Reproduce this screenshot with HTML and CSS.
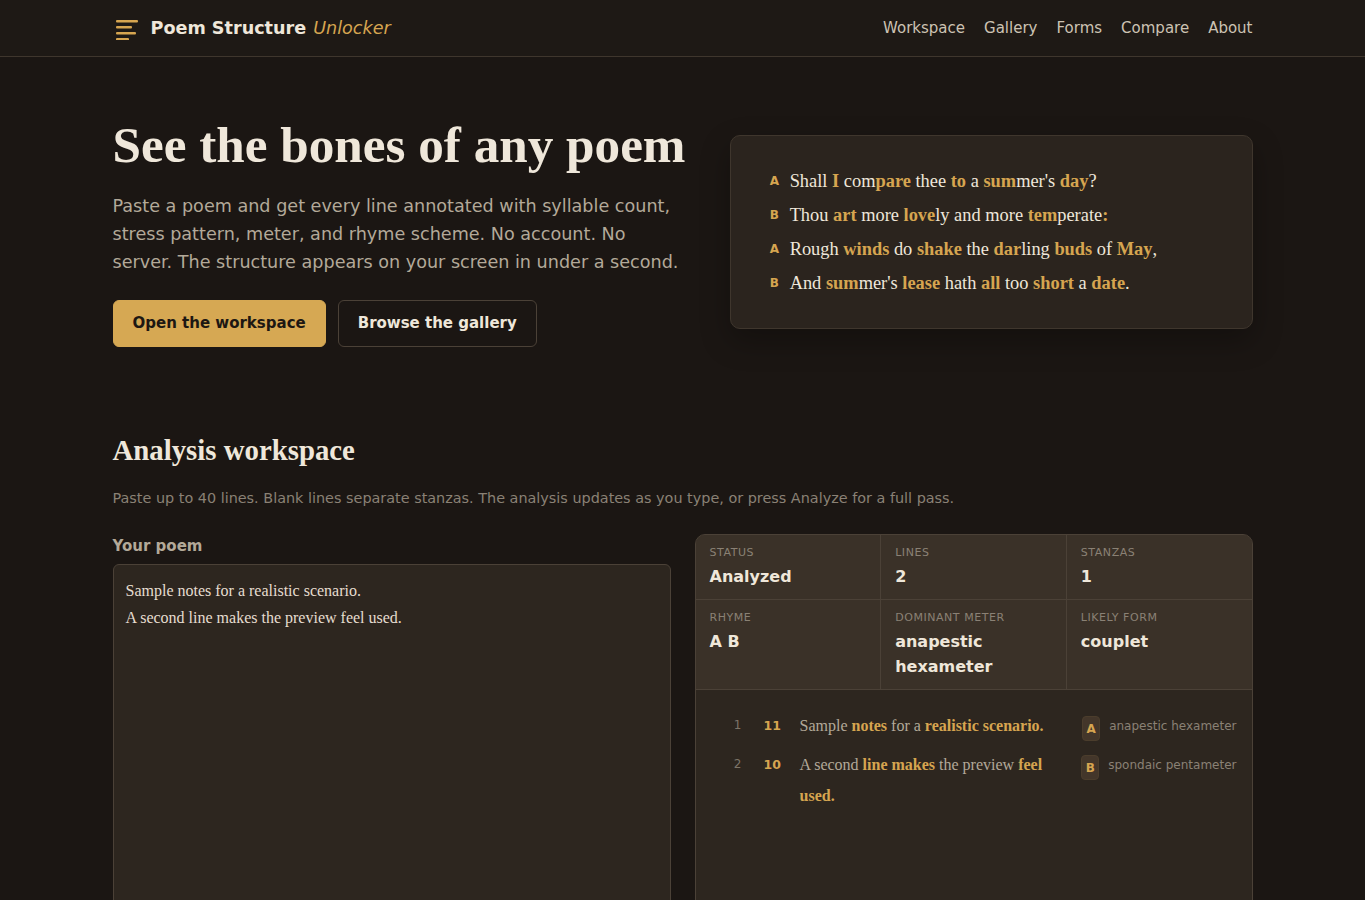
FILE: index.html
```html
<!DOCTYPE html>
<html lang="en">
<head>
<meta charset="utf-8">
<title>Poem Structure Unlocker</title>
<link rel="stylesheet" href="styles.css">
</head>
<body>
<header class="site-header">
  <div class="container header-inner">
    <a class="brand" href="#">
      <svg class="brand-icon" width="22" height="22" viewBox="0 0 22 22" aria-hidden="true">
        <rect x="0" y="2" width="22" height="2.6" rx="1" />
        <rect x="0" y="8" width="16" height="2.6" rx="1" />
        <rect x="0" y="14" width="20" height="2.6" rx="1" />
        <rect x="0" y="20" width="13" height="2.6" rx="1" />
      </svg>
      <span class="brand-name">Poem Structure</span>
      <span class="brand-accent">Unlocker</span>
    </a>
    <nav class="nav">
      <a href="#">Workspace</a>
      <a href="#">Gallery</a>
      <a href="#">Forms</a>
      <a href="#">Compare</a>
      <a href="#">About</a>
    </nav>
  </div>
</header>

<main>
  <section class="hero container">
    <div class="hero-copy">
      <h1>See the bones of any poem</h1>
      <p class="lede">Paste a poem and get every line annotated with syllable count, stress pattern, meter, and rhyme scheme. No account. No server. The structure appears on your screen in under a second.</p>
      <div class="hero-actions">
        <a class="btn btn-primary" href="#">Open the workspace</a>
        <a class="btn btn-ghost" href="#">Browse the gallery</a>
      </div>
    </div>
    <div class="sample-card">
      <div class="sample-line"><span class="rhyme-tag">A</span><span class="verse">Shall <b>I</b> com<b>pare</b> thee <b>to</b> a <b>sum</b>mer's <b>day</b>?</span></div>
      <div class="sample-line"><span class="rhyme-tag">B</span><span class="verse">Thou <b>art</b> more <b>love</b>ly and more <b>tem</b>perate<b>:</b></span></div>
      <div class="sample-line"><span class="rhyme-tag">A</span><span class="verse">Rough <b>winds</b> do <b>shake</b> the <b>dar</b>ling <b>buds</b> of <b>May</b>,</span></div>
      <div class="sample-line"><span class="rhyme-tag">B</span><span class="verse">And <b>sum</b>mer's <b>lease</b> hath <b>all</b> too <b>short</b> a <b>date</b>.</span></div>
    </div>
  </section>

  <section class="workspace container">
    <h2>Analysis workspace</h2>
    <p class="section-note">Paste up to 40 lines. Blank lines separate stanzas. The analysis updates as you type, or press Analyze for a full pass.</p>
    <div class="workspace-grid">
      <div class="editor">
        <label class="field-label" for="poem">Your poem</label>
        <textarea id="poem" class="poem-input" spellcheck="false">Sample notes for a realistic scenario.
A second line makes the preview feel used.</textarea>
      </div>
      <div class="results">
        <div class="stats">
          <div class="stat"><span class="stat-label">Status</span><span class="stat-value">Analyzed</span></div>
          <div class="stat"><span class="stat-label">Lines</span><span class="stat-value">2</span></div>
          <div class="stat"><span class="stat-label">Stanzas</span><span class="stat-value">1</span></div>
          <div class="stat"><span class="stat-label">Rhyme</span><span class="stat-value">A B</span></div>
          <div class="stat"><span class="stat-label">Dominant meter</span><span class="stat-value">anapestic hexameter</span></div>
          <div class="stat"><span class="stat-label">Likely form</span><span class="stat-value">couplet</span></div>
        </div>
        <div class="line-list">
          <div class="line-row">
            <span class="line-num">1</span>
            <span class="line-syll">11</span>
            <span class="line-text">Sample <b>notes</b> for a <b>realistic scenario.</b></span>
            <span class="line-meta"><span class="rhyme-badge">A</span><span class="meter">anapestic hexameter</span></span>
          </div>
          <div class="line-row">
            <span class="line-num">2</span>
            <span class="line-syll">10</span>
            <span class="line-text">A second <b>line makes</b> the preview <b>feel used.</b></span>
            <span class="line-meta"><span class="rhyme-badge">B</span><span class="meter">spondaic pentameter</span></span>
          </div>
        </div>
      </div>
    </div>
  </section>
</main>
</body>
</html>
```

FILE: styles.css
```css
:root {
  --bg: #1b1613;
  --header: #1e1915;
  --surface: #2d261f;
  --surface-2: #3a3128;
  --line: #3f362d;
  --line-strong: #4b4137;
  --ink: #efe7da;
  --soft: #cdc3b3;
  --muted: #b3a999;
  --faint: #8a8175;
  --gold: #d6a550;
  --serif: "Liberation Serif", "Times New Roman", serif;
  --sans: "DejaVu Sans", "Noto Sans", sans-serif;
}

* { box-sizing: border-box; }

html, body {
  margin: 0;
  background: var(--bg);
  color: var(--ink);
  font-family: var(--sans);
}

a { color: inherit; text-decoration: none; }

.container {
  max-width: 1140px;
  margin: 0 auto;
}

/* ---------- header ---------- */
.site-header {
  background: var(--header);
  border-bottom: 1px solid var(--line);
}

.header-inner {
  height: 56px;
  display: flex;
  align-items: center;
  justify-content: space-between;
}

.brand {
  display: flex;
  align-items: center;
  padding-left: 3px;
}

.brand-icon {
  fill: var(--gold);
  margin-right: 13px;
  margin-top: 1px;
}

.brand-name {
  font-weight: 700;
  font-size: 17.6px;
  color: var(--ink);
}

.brand-accent {
  font-style: italic;
  font-size: 17.6px;
  color: var(--gold);
  margin-left: 7px;
}

.nav {
  display: flex;
  gap: 19px;
}

.nav a {
  font-size: 15px;
  color: var(--soft);
}

/* ---------- hero ---------- */
.hero {
  display: grid;
  grid-template-columns: 1.1fr 1fr;
  column-gap: 42px;
  align-items: center;
  padding-top: 60px;
}

.hero h1 {
  font-family: var(--serif);
  font-weight: 700;
  font-size: 51.2px;
  line-height: 1.1;
  margin: 0 0 19px;
  color: var(--ink);
  white-space: nowrap;
}

.lede {
  font-size: 17.6px;
  line-height: 28px;
  color: var(--muted);
  margin: 0 0 24px;
}

.hero-actions {
  display: flex;
  gap: 12px;
}

.btn {
  display: inline-block;
  font-size: 15px;
  font-weight: 700;
  line-height: 17px;
  padding: 14px 19px;
  border-radius: 6px;
  border: 1px solid transparent;
}

.btn-primary {
  background: #d6a853;
  color: #1d1712;
  border-color: #d6a853;
}

.btn-ghost {
  color: var(--ink);
  border-color: var(--line-strong);
}

.sample-card {
  background: #2b241e;
  border: 1px solid var(--line);
  border-radius: 10px;
  padding: 28px 39px;
  box-shadow: 0 12px 30px rgba(0, 0, 0, 0.28);
}

.sample-line {
  display: grid;
  grid-template-columns: 20px 1fr;
  align-items: center;
  font-family: var(--serif);
  font-size: 18.4px;
  line-height: 34px;
  height: 34px;
  color: var(--ink);
}

.rhyme-tag {
  font-family: var(--sans);
  font-weight: 700;
  font-size: 12px;
  line-height: 34px;
  color: var(--gold);
}

.verse b, .line-text b {
  color: var(--gold);
  font-weight: 700;
}

/* ---------- workspace ---------- */
.workspace {
  padding-top: 86px;
}

.workspace h2 {
  font-family: var(--serif);
  font-weight: 700;
  font-size: 28.8px;
  line-height: 1.2;
  margin: 0 0 20px;
  color: var(--ink);
}

.section-note {
  font-size: 14.4px;
  line-height: 21.6px;
  color: var(--faint);
  margin: 0 0 25px;
}

.workspace-grid {
  display: grid;
  grid-template-columns: 1fr 1fr;
  gap: 24px;
}

.editor {
  display: flex;
  flex-direction: column;
}

.field-label {
  font-size: 15px;
  font-weight: 700;
  line-height: 24px;
  color: var(--muted);
  margin-bottom: 6px;
}

.poem-input {
  display: block;
  width: 100%;
  height: 390px;
  resize: none;
  background: var(--surface);
  border: 1px solid var(--line-strong);
  border-radius: 6px;
  padding: 12px 12px;
  font-family: var(--serif);
  font-size: 16px;
  line-height: 27px;
  color: #e6ddd0;
  outline: none;
}

.results {
  background: var(--surface);
  border: 1px solid var(--line-strong);
  border-radius: 10px;
  overflow: hidden;
  min-height: 420px;
}

.stats {
  display: grid;
  grid-template-columns: repeat(3, 1fr);
  gap: 1px;
  background: var(--line-strong);
  border-bottom: 1px solid var(--line-strong);
}

.stat {
  background: var(--surface-2);
  padding: 10px 14px;
  display: flex;
  flex-direction: column;
}

.stat-label {
  font-size: 11px;
  line-height: 15px;
  letter-spacing: 0.05em;
  text-transform: uppercase;
  color: var(--faint);
  margin-bottom: 4px;
}

.stat-value {
  font-size: 16px;
  font-weight: 700;
  line-height: 25px;
  color: var(--ink);
}

.line-list {
  padding: 20px 15px 20px 20px;
  display: flex;
  flex-direction: column;
  gap: 8px;
}

.line-row {
  display: grid;
  grid-template-columns: 28px 16px 1fr auto;
  column-gap: 20px;
  align-items: start;
}

.line-num {
  font-size: 12px;
  line-height: 31px;
  color: #7d7468;
  text-align: right;
  padding-right: 2px;
}

.line-syll {
  font-size: 12.5px;
  font-weight: 700;
  line-height: 31px;
  color: var(--gold);
  white-space: nowrap;
}

.line-text {
  font-family: var(--serif);
  font-size: 16px;
  line-height: 31px;
  color: var(--muted);
}

.line-meta {
  display: flex;
  align-items: center;
  gap: 9px;
  height: 31px;
}

.rhyme-badge {
  width: 18px;
  height: 25px;
  border-radius: 4px;
  background: #43362a;
  border: 1px solid #4b3d2c;
  color: var(--gold);
  font-size: 12px;
  font-weight: 700;
  display: flex;
  align-items: center;
  justify-content: center;
  margin-top: 6px;
}

.meter {
  font-size: 12px;
  color: var(--faint);
  white-space: nowrap;
}
```
